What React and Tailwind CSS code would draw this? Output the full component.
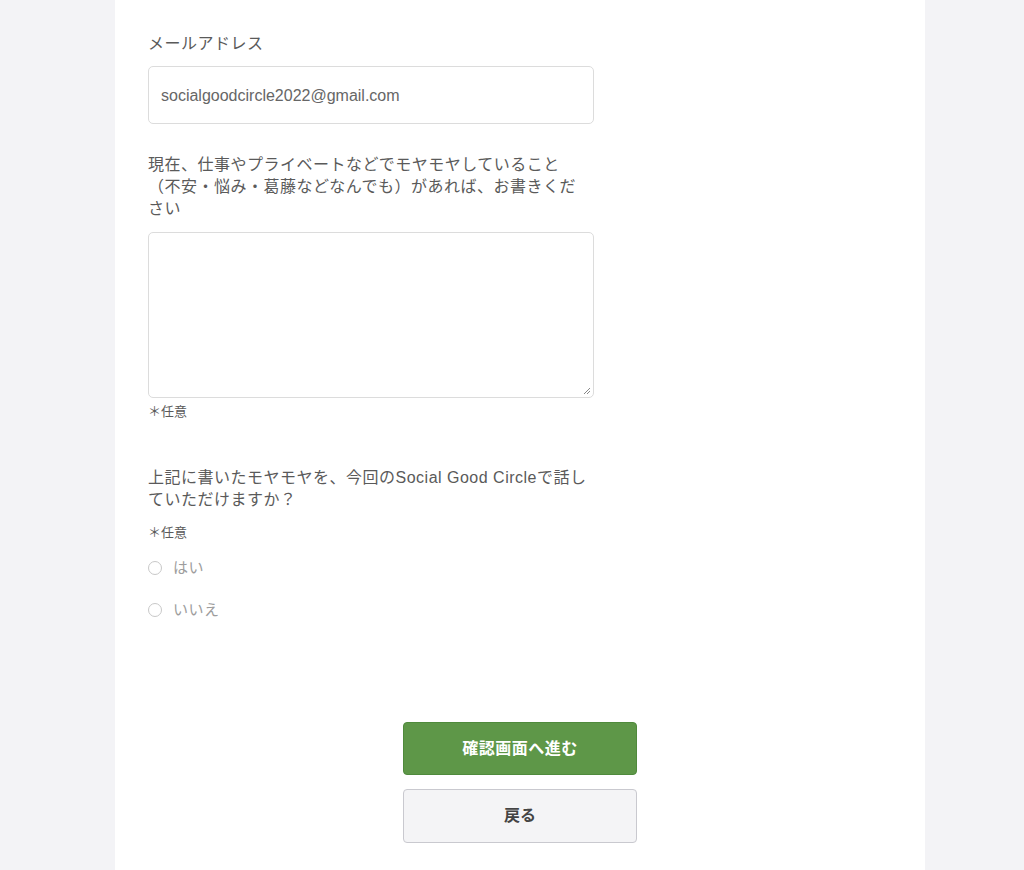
import React from "react";

function Radio({ label }) {
  return (
    <label className="flex items-center gap-[11px] h-[20px] text-[15px] text-[#9d9d9d] tracking-[0.5px]">
      <span className="w-[14px] h-[14px] rounded-full border border-[#c8c8c8] bg-white" />
      <span>{label}</span>
    </label>
  );
}

export default function App() {
  return (
    <div
      className="min-h-[870px] bg-[#f3f3f6] flex"
      style={{ fontFamily: '"Liberation Sans", "Noto Sans CJK JP", sans-serif' }}
    >
      <div className="ml-[115px] w-[810px] bg-white px-[33px] pt-[33px] pb-[28px] text-[#5a5a5a]">
        <p className="text-[16px] leading-[22px] tracking-[0.5px]">メールアドレス</p>
        <div className="mt-[11px] w-[446px] h-[58px] border border-[#dcdcdc] rounded-[5px] flex items-center px-[12px] pt-[2px] text-[16px] text-[#666]">
          socialgoodcircle2022@gmail.com
        </div>

        <p className="mt-[30px] w-[440px] text-[16px] leading-[22px] tracking-[0.5px]">
          現在、仕事やプライベートなどでモヤモヤしていること（不安・悩み・葛藤などなんでも）があれば、お書きください
        </p>
        <div className="mt-[12px] w-[446px] h-[166px] border border-[#dcdcdc] rounded-[5px] relative">
          <svg className="absolute right-[2px] bottom-[2px]" width="9" height="9" viewBox="0 0 9 9">
            <path d="M8 2L2 8M8 5L5 8" stroke="#888" strokeWidth="1" />
          </svg>
        </div>
        <p className="mt-[5px] text-[13px] leading-[18px]">＊任意</p>

        <p className="mt-[46px] w-[440px] text-[16px] leading-[22px] tracking-[0.5px]">
          上記に書いたモヤモヤを、今回のSocial Good Circleで話していただけますか？
        </p>
        <p className="mt-[13px] text-[13px] leading-[18px]">＊任意</p>
        <div className="mt-[16px] flex flex-col gap-[22px]">
          <Radio label="はい" />
          <Radio label="いいえ" />
        </div>

        <div className="mt-[102px] flex flex-col items-center gap-[14px]">
          <button className="w-[234px] h-[53px] rounded-[4px] bg-[#5e9748] border border-[#4f8a3c] text-white text-[16px] font-semibold tracking-[0.5px]">
            確認画面へ進む
          </button>
          <button className="w-[234px] h-[54px] rounded-[4px] bg-[#f4f4f6] border border-[#c9c9cf] text-[#444] text-[16px] font-semibold">
            戻る
          </button>
        </div>
      </div>
    </div>
  );
}
